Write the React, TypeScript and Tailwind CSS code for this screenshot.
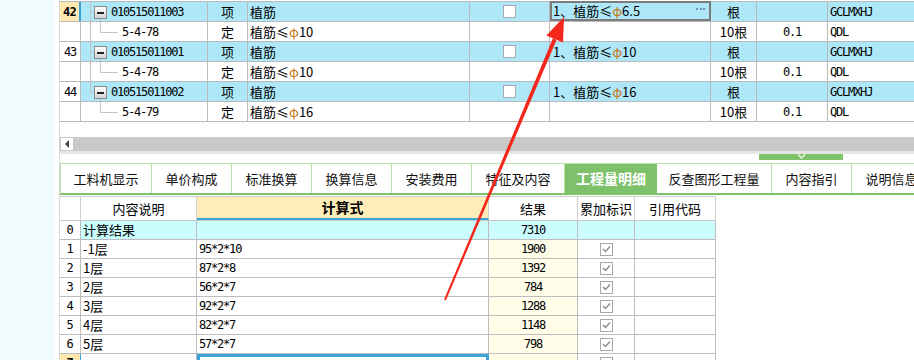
import React from "react";

const cjk = { fontFamily: '"Noto Sans CJK SC", "Noto Sans", sans-serif' };
const mono = { fontFamily: '"DejaVu Sans Mono", "Noto Sans CJK SC", monospace' };

type TopRowData = {
    num: string;
    code: string;
    type: string;
    name: string;
    spec: string;
    unit: string;
    qty: string;
    ref: string;
    head: boolean;
    active?: boolean;
    trunk: "full" | "half" | "none";
};

const topRows: TopRowData[] = [
    { num: "42", code: "010515011003", type: "项", name: "植筋", spec: "1、植筋≤φ6.5", unit: "根", qty: "", ref: "GCLMXHJ", head: true, active: true, trunk: "full" },
    { num: "", code: "5-4-78", type: "定", name: "植筋≤φ10", spec: "", unit: "10根", qty: "0.1", ref: "QDL", head: false, trunk: "full" },
    { num: "43", code: "010515011001", type: "项", name: "植筋", spec: "1、植筋≤φ10", unit: "根", qty: "", ref: "GCLMXHJ", head: true, trunk: "full" },
    { num: "", code: "5-4-78", type: "定", name: "植筋≤φ10", spec: "", unit: "10根", qty: "0.1", ref: "QDL", head: false, trunk: "full" },
    { num: "44", code: "010515011002", type: "项", name: "植筋", spec: "1、植筋≤φ16", unit: "根", qty: "", ref: "GCLMXHJ", head: true, trunk: "half" },
    { num: "", code: "5-4-79", type: "定", name: "植筋≤φ16", spec: "", unit: "10根", qty: "0.1", ref: "QDL", head: false, trunk: "none" },
];

const tabs = [
    { label: "工料机显示", w: "w-[91px]" },
    { label: "单价构成", w: "w-[80px]" },
    { label: "标准换算", w: "w-[80px]" },
    { label: "换算信息", w: "w-[80px]" },
    { label: "安装费用", w: "w-[80px]" },
    { label: "特征及内容", w: "w-[93px]" },
    { label: "工程量明细", w: "w-[92px]", active: true },
    { label: "反查图形工程量", w: "w-[115px]" },
    { label: "内容指引", w: "w-[80px]" },
    { label: "说明信息", w: "w-[80px]" },
];

const calcRows = [
    { n: "0", desc: "计算结果", expr: "", result: "7310", total: true },
    { n: "1", desc: "-1层", expr: "95*2*10", result: "1900" },
    { n: "2", desc: "1层", expr: "87*2*8", result: "1392" },
    { n: "3", desc: "2层", expr: "56*2*7", result: "784" },
    { n: "4", desc: "3层", expr: "92*2*7", result: "1288" },
    { n: "5", desc: "4层", expr: "82*2*7", result: "1148" },
    { n: "6", desc: "5层", expr: "57*2*7", result: "798" },
];

// colours the φ glyph the way the grid renders it
function Phi({ text }: { text: string }) {
    const parts = text.split("φ");
    return (
        <>
            {parts.map((p, i) => (
                <React.Fragment key={i}>
                    {i > 0 && <span className="text-[#c8781c]">φ</span>}
                    {p}
                </React.Fragment>
            ))}
        </>
    );
}

function Check({ on }: { on?: boolean }) {
    return (
        <div className="w-[13px] h-[13px] border border-[#a8a8a8] bg-white flex items-center justify-center">
            {on && (
                <svg width="9" height="8" viewBox="0 0 9 8">
                    <polyline points="1,4 3.5,6.5 8,1.5" fill="none" stroke="#8a8a8a" strokeWidth="1.4" />
                </svg>
            )}
        </div>
    );
}

function TopRow({ r }: { r: TopRowData }) {
    const bg = r.head ? "bg-[#aee8f8]" : "bg-white";
    return (
        <div className="flex h-[20px] border-b border-[#b9b9b9] text-[13px] text-black">
            {/* row number */}
            <div
                className={
                    r.active
                        ? "w-[21px] shrink-0 border-r-2 border-[#3a9fd3] bg-[#ffe9b1] flex items-center justify-center font-bold text-[12px] tracking-[-0.8px]"
                        : "w-[21px] shrink-0 border-r border-[#b9b9b9] bg-white flex items-center justify-center text-[12px] tracking-[-1.2px]"
                }
                style={mono}
            >
                {r.num}
            </div>

            {/* tree */}
            <div className={`relative w-[127px] shrink-0 border-r border-[#b9b9b9] ${bg}`}>
                {r.trunk === "full" && <div className="absolute left-[9px] top-0 bottom-0 w-px bg-[#c4c4c4]" />}
                {r.trunk === "half" && <div className="absolute left-[9px] top-0 h-[10px] w-px bg-[#c4c4c4]" />}
                {r.head ? (
                    <>
                        <div className="absolute left-[9px] top-[10px] w-[5px] h-px bg-[#c4c4c4]" />
                        <div className="absolute left-[19px] top-[16px] bottom-0 w-px bg-[#c4c4c4]" />
                        <div className="absolute left-[13px] top-[4px] w-[13px] h-[13px] border border-[#8a8a8a] bg-gradient-to-b from-white to-[#d4d4d4] flex items-center justify-center">
                            <div className="w-[7px] h-[2px] bg-[#222]" />
                        </div>
                        <span className="absolute left-[30px] top-0 h-full flex items-center text-[12px] tracking-[-1.2px]" style={mono}>
                            {r.code}
                        </span>
                    </>
                ) : (
                    <>
                        <div className="absolute left-[19px] top-0 h-[10px] w-px bg-[#c4c4c4]" />
                        <div className="absolute left-[19px] top-[10px] w-[18px] h-px bg-[#c4c4c4]" />
                        <span className="absolute left-[41px] top-0 h-full flex items-center tracking-[-1.2px] text-[12px]" style={mono}>
                            {r.code}
                        </span>
                    </>
                )}
            </div>

            <div className={`w-[40px] shrink-0 border-r border-[#b9b9b9] ${bg} flex items-center justify-center`} style={cjk}>
                {r.type}
            </div>
            <div className={`w-[222px] shrink-0 border-r border-[#b9b9b9] ${bg} flex items-center pl-[2px]`} style={cjk}>
                <Phi text={r.name} />
            </div>
            <div className={`w-[80px] shrink-0 border-r border-[#b9b9b9] ${bg} flex items-center justify-center`}>
                {r.head && <Check />}
            </div>
            <div
                className={
                    r.active
                        ? `w-[161px] shrink-0 border-2 border-[#7c7c7c] -mt-px ${bg} flex items-center pl-[1px] justify-between pr-[4px]`
                        : `w-[161px] shrink-0 border-r border-[#b9b9b9] ${bg} flex items-center pl-[3px]`
                }
                style={cjk}
            >
                <span>
                    <Phi text={r.spec} />
                </span>
                {r.active && (
                    <span className="flex gap-[1.5px] -mt-[4px]">
                        <span className="w-[2px] h-[1.5px] bg-[#7090b8]" />
                        <span className="w-[2px] h-[1.5px] bg-[#7090b8]" />
                        <span className="w-[2px] h-[1.5px] bg-[#7090b8]" />
                    </span>
                )}
            </div>
            <div className={`w-[46px] shrink-0 border-r border-[#b9b9b9] ${bg} flex items-center justify-center`} style={cjk}>
                {r.unit}
            </div>
            <div className={`w-[71px] shrink-0 border-r border-[#b9b9b9] ${bg} flex items-center justify-center tracking-[-1.2px] text-[12px]`} style={mono}>
                {r.qty}
            </div>
            <div className={`flex-1 ${bg} flex items-center pl-[2px] tracking-[-1.2px] text-[12px]`} style={mono}>
                {r.ref}
            </div>
        </div>
    );
}

function CalcRow({ r }: { r: (typeof calcRows)[number] }) {
    const line = "border-r border-[#bdbdbd]";
    const tint = r.total ? "bg-[#cbfcfe]" : "bg-white";
    return (
        <div className="flex h-[19px] border-b border-[#bdbdbd] text-[13px]">
            <div className={`w-[21px] shrink-0 ${line} bg-white flex items-center justify-center text-[12px]`} style={mono}>
                {r.n}
            </div>
            <div className={`w-[116px] shrink-0 ${line} ${tint} flex items-center pl-[2px]`} style={cjk}>
                {r.desc}
            </div>
            <div className={`w-[292px] shrink-0 ${line} ${tint} flex items-center pl-[2px] text-[12px] tracking-[-1.2px]`} style={mono}>
                {r.expr}
            </div>
            <div
                className={`w-[89px] shrink-0 ${line} ${r.total ? "bg-[#cbfcfe]" : "bg-[#fffde8]"} flex items-center justify-center text-[12px] tracking-[-1.2px]`}
                style={mono}
            >
                {r.result}
            </div>
            <div className={`w-[57px] shrink-0 ${line} ${tint} flex items-center justify-center`}>
                {!r.total && <Check on />}
            </div>
            <div className={`w-[81px] shrink-0 ${line} ${tint}`} />
        </div>
    );
}

export default function App() {
    return (
        <div className="relative w-[914px] h-[360px] overflow-hidden flex bg-white" style={cjk}>
            <div className="w-[54px] shrink-0 bg-[#effbfd]" />
            <div className="w-[6px] shrink-0 border-r border-[#d6d6d6] bg-white" />

            <div className="flex-1 min-w-0 overflow-hidden">
                {/* Upper list */}
                <div className="mt-px border-t border-[#b9b9b9]">
                    {topRows.map((r, i) => (
                        <TopRow key={i} r={r} />
                    ))}
                </div>
                <div className="h-[15px]" />

                {/* Horizontal scrollbar */}
                <div className="flex h-[14px]">
                    <div className="w-[14px] border border-[#c9c9c9] bg-white flex items-center justify-center">
                        <div className="w-0 h-0 border-y-[4px] border-y-transparent border-r-[4px] border-r-[#444]" />
                    </div>
                    <div className="flex-1 bg-[#c9c9c9]" />
                </div>
                <div className="h-[3px] bg-[#e6e6e6]" />
                <div className="h-[9px] flex">
                    <div className="ml-[699px] w-[84px] h-[6px] bg-[#7fc36b] flex justify-center">
                        <svg width="9" height="6" viewBox="0 0 9 6">
                            <polyline points="1,0.5 4.5,4 8,0.5" fill="none" stroke="#e6f5e0" strokeWidth="1.5" />
                        </svg>
                    </div>
                </div>

                {/* Tabs */}
                <div className="flex h-[32px] border-t border-[#b8e3a8] border-b-2 border-b-[#7dc26a] text-[13px] border-l border-l-[#b8e3a8]">
                    {tabs.map((t) => (
                        <div
                            key={t.label}
                            className={
                                t.active
                                    ? `${t.w} shrink-0 bg-[#7dc26a] text-white font-bold text-[14px] flex items-center justify-center`
                                    : `${t.w} shrink-0 border-r border-[#b8e3a8] text-[#111] flex items-center justify-center`
                            }
                        >
                            {t.label}
                        </div>
                    ))}
                </div>

                {/* Quantity detail grid */}
                <div className="mt-px w-[656px] border-t border-[#d0d0d0]">
                    <div className="flex h-[24px] border-b border-[#c8c8c8] text-[13px]">
                        <div className="w-[21px] shrink-0 border-r border-[#d0d0d0] bg-white" />
                        <div className="w-[116px] shrink-0 border-r border-[#d0d0d0] bg-white flex items-center justify-center">内容说明</div>
                        <div className="w-[292px] shrink-0 border-r border-[#d0d0d0] bg-[#ffedb9] border-b-2 border-b-[#3ba5d5] flex items-center justify-center font-bold text-[14px]">
                            计算式
                        </div>
                        <div className="w-[89px] shrink-0 border-r border-[#d0d0d0] bg-white flex items-center justify-center">结果</div>
                        <div className="w-[57px] shrink-0 border-r border-[#d0d0d0] bg-white flex items-center justify-center">累加标识</div>
                        <div className="w-[81px] shrink-0 border-r border-[#d0d0d0] bg-white flex items-center justify-center">引用代码</div>
                    </div>
                    {calcRows.map((r) => (
                        <CalcRow key={r.n} r={r} />
                    ))}
                    <div className="flex h-[19px] text-[12px]">
                        <div className="w-[21px] shrink-0 border-r border-[#3aa5d5] bg-[#ffe8b0] flex items-start justify-center text-[12px] font-bold" style={mono}>
                            7
                        </div>
                        <div className="w-[116px] shrink-0 border-r border-[#bdbdbd] bg-white" />
                        <div className="w-[292px] shrink-0 border-[3px] border-[#3aa5d5] bg-white" />
                        <div className="w-[89px] shrink-0 border-r border-[#bdbdbd] bg-[#fffde8]" />
                        <div className="w-[57px] shrink-0 border-r border-[#bdbdbd] bg-white flex justify-center pt-[3px]">
                            <Check on />
                        </div>
                        <div className="w-[81px] shrink-0 border-r border-[#bdbdbd] bg-white" />
                    </div>
                </div>
            </div>

            {/* Red annotation arrow drawn over the screenshot */}
            <svg className="absolute left-0 top-0 pointer-events-none" width="914" height="360" viewBox="0 0 914 360">
                <polygon points="445.9,300.4 444.1,299.6 552.9,38.3 556.5,39.9" fill="#f3271c" />
                <polygon points="564,17 563,42.6 546.4,35.6" fill="#f3271c" />
            </svg>
        </div>
    );
}
